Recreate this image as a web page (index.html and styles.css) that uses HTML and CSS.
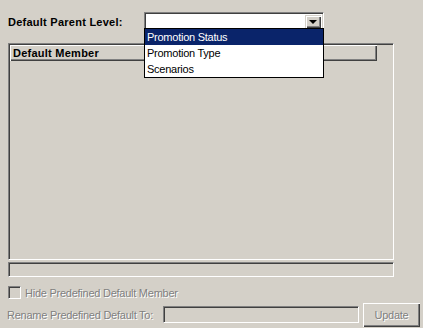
FILE: index.html
```html
<!DOCTYPE html>
<html lang="en">
<head>
    <meta charset="UTF-8">
    <title>Default Member</title>
    <link rel="stylesheet" href="styles.css">
</head>
<body>
    <div class="dialog">
        <div class="parent-row">
            <span class="parent-label">Default Parent Level:</span>
            <div class="combo">
                <span class="combo-btn"><span class="arrow"></span></span>
                <!-- open dropdown list -->
                <ul class="combo-list">
                    <li class="selected">Promotion Status</li>
                    <li>Promotion Type</li>
                    <li>Scenarios</li>
                </ul>
            </div>
        </div>

        <div class="member-list">
            <div class="list-header">
                <div class="header-cell">Default Member</div>
            </div>
        </div>
        <div class="hscroll"></div>

        <div class="check-row">
            <span class="checkbox"></span>
            <span class="disabled-text">Hide Predefined Default Member</span>
        </div>

        <div class="rename-row">
            <span class="disabled-text rename-label">Rename Predefined Default To:</span>
            <span class="rename-input"></span>
            <button class="update-btn" disabled>Update</button>
        </div>
    </div>
</body>
</html>
```

FILE: styles.css
```css
body {
    margin: 0;
    background: #d4d0c8;
    font-family: 'Liberation Sans', Arial, sans-serif;
    font-size: 11px;
    letter-spacing: -0.25px;
    color: #000;
}
.dialog {
    width: 423px;
    height: 328px;
    padding: 12px 0 0 8px;
    box-sizing: border-box;
}
.parent-row {
    display: flex;
    align-items: center;
    height: 19px;
}
.parent-label {
    width: 136px;
    font-weight: bold;
    letter-spacing: 0.25px;
}
.combo {
    position: relative;
    width: 180px;
    height: 19px;
    box-sizing: border-box;
    border: 1px solid;
    border-color: #808080 #fff #fff #808080;
    box-shadow: inset 1px 1px #404040, inset -1px -1px #d4d0c8;
    background: #fff;
}
.combo-btn {
    position: absolute;
    right: 2px;
    top: 2px;
    width: 16px;
    height: 13px;
    background: #d4d0c8;
    box-shadow: inset 1px 1px #d4d0c8, inset 2px 2px #fff, inset -1px -1px #404040, inset -2px -2px #808080;
    display: flex;
    align-items: center;
    justify-content: center;
}
.arrow {
    width: 0;
    height: 0;
    border-left: 4px solid transparent;
    border-right: 4px solid transparent;
    border-top: 4px solid #000;
}
.combo-list {
    position: absolute;
    top: 15px;
    left: -1px;
    width: 178px;
    margin: 0;
    padding: 0;
    list-style: none;
    background: #fff;
    border: 1px solid #000;
    z-index: 2;
}
.combo-list li {
    height: 16px;
    line-height: 16px;
    padding-left: 2px;
}
.combo-list li.selected {
    background: #0a246a;
    color: #fff;
}

.member-list {
    margin-top: 12px;
    width: 386px;
    height: 217px;
    box-sizing: border-box;
    border: 1px solid;
    border-color: #808080 #fff #fff #808080;
    box-shadow: inset 1px 1px #404040, inset -1px -1px #d4d0c8;
    padding: 1px 0 0 1px;
}
.list-header {
    height: 16px;
}
.header-cell {
    width: 367px;
    height: 16px;
    box-sizing: border-box;
    padding: 1px 0 0 3px;
    font-weight: bold;
    letter-spacing: 0.25px;
    line-height: 14px;
    box-shadow: inset 1px 1px #fff, inset -1px -1px #404040, inset -2px -2px #808080;
}
.hscroll {
    margin-top: 2px;
    width: 386px;
    height: 15px;
    box-sizing: border-box;
    border: 1px solid;
    border-color: #808080 #fff #fff #808080;
    box-shadow: inset 1px 1px #404040;
}

.disabled-text {
    color: #808080;
    text-shadow: 1px 1px #fff;
}
.check-row {
    display: flex;
    align-items: center;
    margin-top: 9px;
    height: 13px;
}
.checkbox {
    width: 13px;
    height: 13px;
    box-sizing: border-box;
    border: 1px solid;
    border-color: #808080 #fff #fff #808080;
    box-shadow: inset 1px 1px #404040, inset -1px -1px #d4d0c8;
    margin-right: 4px;
}
.rename-row {
    display: flex;
    align-items: center;
    margin-top: 3px;
    margin-left: -1px;
    height: 25px;
}
.rename-label {
    width: 156px;
}
.rename-input {
    width: 196px;
    height: 17px;
    box-sizing: border-box;
    border: 1px solid;
    border-color: #808080 #fff #fff #808080;
    box-shadow: inset 1px 1px #404040, inset -1px -1px #d4d0c8;
}
.update-btn {
    margin-left: 4px;
    width: 57px;
    height: 24px;
    border: none;
    background: #d4d0c8;
    font-family: inherit;
    font-size: 11px;
    letter-spacing: -0.25px;
    color: #808080;
    text-shadow: 1px 1px #fff;
    box-shadow: inset 1px 1px #fff, inset -1px -1px #404040, inset -2px -2px #808080;
}
```
